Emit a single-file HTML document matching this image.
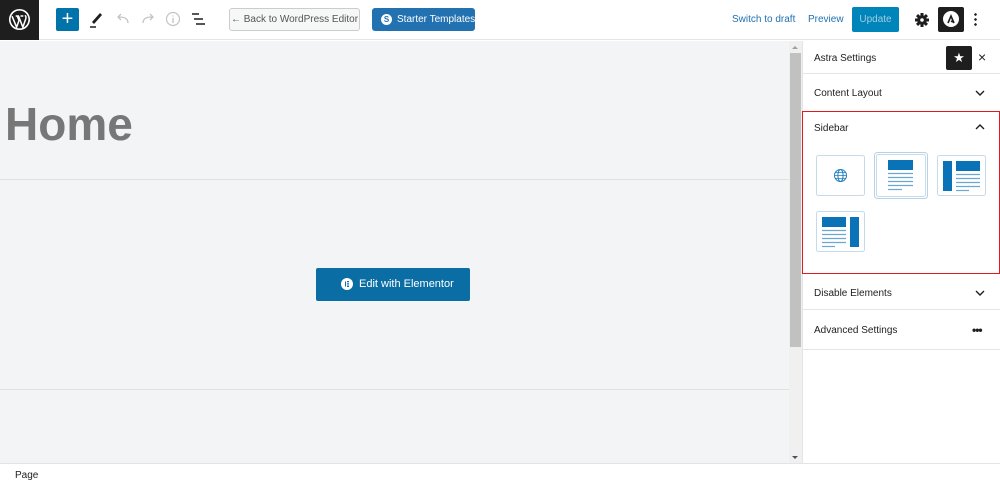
<!DOCTYPE html>
<html><head><style>
*{margin:0;padding:0;box-sizing:border-box}
body{width:1000px;height:485px;overflow:hidden;font-family:"Liberation Sans",sans-serif;background:#fff;position:relative;color:#1e1e1e}
.a{position:absolute;white-space:nowrap}
.t{font-size:10px}
</style></head><body>
<div class="a" style="left:0;top:0;width:1000px;height:40px;background:#fff;border-bottom:1px solid #e2e4e7"></div>
<div class="a" style="left:0;top:0;width:39px;height:40px;background:#1e1e1e"></div>
<svg class="a" style="left:8px;top:8px" width="23" height="23" viewBox="0 0 24 24"><circle cx="12" cy="12" r="11" fill="#fff"/><circle cx="12" cy="12" r="9.3" fill="#1e1e1e"/><path d="M4.2 8.5 L9 20 L11.5 13 L9.5 8 M8 8.3h3.5 M11 8.5 L15.5 20 L18.5 11.5 C19.2 9.5 18.5 8 17.5 8 M13 8.3h3" stroke="#fff" stroke-width="1.6" fill="none"/></svg>
<div class="a" style="left:56px;top:8px;width:23px;height:23px;background:#0073aa;border-radius:2px;color:#fff;font-size:20px;line-height:22px;text-align:center">+</div>
<svg class="a" style="left:88px;top:10px" width="16" height="18"><path d="M4 12 L12 3 L14 5 L6 14 Z" fill="#1e1e1e"/><path d="M2 17h6" stroke="#1e1e1e" stroke-width="1.5"/></svg>
<svg class="a" style="left:115px;top:12px" width="16" height="14"><path d="M13 11 C13 6 9 5 4 5 M6 2 L3 5 L6 8" stroke="#c3c4c7" stroke-width="1.3" fill="none"/></svg>
<svg class="a" style="left:140px;top:12px" width="16" height="14"><path d="M3 11 C3 6 7 5 12 5 M10 2 L13 5 L10 8" stroke="#c3c4c7" stroke-width="1.3" fill="none"/></svg>
<svg class="a" style="left:165px;top:11px" width="16" height="16"><circle cx="8" cy="8" r="6.5" stroke="#c3c4c7" stroke-width="1.2" fill="none"/><path d="M8 7v5M8 4.5v1" stroke="#c3c4c7" stroke-width="1.4"/></svg>
<svg class="a" style="left:191px;top:12px" width="16" height="14"><path d="M1 2h7M3 7h9M5 12h9" stroke="#1e1e1e" stroke-width="1.6"/></svg>
<div class="a" style="left:229px;top:8px;width:131px;height:23px;border:1px solid #ccc;border-radius:3px;background:#f6f7f7;color:#555;font-size:10px;line-height:21px;text-align:center">← Back to WordPress Editor</div>
<div class="a" style="left:372px;top:8px;width:103px;height:23px;background:#2271b1;border-radius:3px;color:#fff;font-size:10px;line-height:23px;padding-left:25px">Starter Templates</div>
<div class="a" style="left:381px;top:14px;width:11px;height:11px;border-radius:50%;background:#fff;color:#2271b1;font-size:8px;font-weight:bold;line-height:11px;text-align:center">S</div>
<div class="a t" style="left:732px;top:14px;color:#2271b1">Switch to draft</div>
<div class="a t" style="left:808px;top:14px;color:#2271b1">Preview</div>
<div class="a" style="left:852px;top:7px;width:47px;height:25px;background:#0085ba;border-radius:2px;color:#a0cde3;font-size:10px;line-height:25px;text-align:center">Update</div>
<svg class="a" style="left:914px;top:12px" width="16" height="16" viewBox="0 0 16 16"><g fill="#1e1e1e"><rect x="6.5" y="1" width="3" height="14"/><rect x="6.5" y="1" width="3" height="14" transform="rotate(45 8 8)"/><rect x="6.5" y="1" width="3" height="14" transform="rotate(90 8 8)"/><rect x="6.5" y="1" width="3" height="14" transform="rotate(135 8 8)"/><circle cx="8" cy="8" r="4.8"/></g><circle cx="8" cy="8" r="1.8" fill="#fff"/></svg>
<div class="a" style="left:938px;top:7px;width:26px;height:25px;background:#1e1e1e;border-radius:2px"></div>
<div class="a" style="left:943px;top:11px;width:16px;height:16px;border-radius:50%;background:#fff"></div>
<svg class="a" style="left:943px;top:11px" width="16" height="16"><path d="M5 12 L8 5 L11 12 M8 10 L10 11" stroke="#1e1e1e" stroke-width="1.6" fill="none"/></svg>
<div class="a" style="left:974px;top:12px;width:3px;height:15px;background:radial-gradient(circle,#1e1e1e 1.2px,transparent 1.4px) 0 0/3px 5px"></div>
<div class="a" style="left:0;top:41px;width:789px;height:422px;background:#f3f4f5"></div>
<div class="a" style="left:5px;top:97px;font-size:46px;font-weight:bold;color:#777">Home</div>
<div class="a" style="left:0;top:179px;width:789px;height:1px;background:#e0e0e0"></div>
<div class="a" style="left:0;top:389px;width:789px;height:1px;background:#e0e0e0"></div>
<div class="a" style="left:316px;top:268px;width:154px;height:33px;background:#0a6ea5;border-radius:2px;color:#fff;font-size:11px;line-height:33px;padding-left:43px">Edit with Elementor</div>
<div class="a" style="left:341px;top:278px;width:12px;height:12px;border-radius:50%;background:#fff"></div>
<svg class="a" style="left:341px;top:278px" width="12" height="12"><path d="M4.5 3.5v5M6 3.5h2M6 5.3h2M6 7h2M6 8.5h2" stroke="#0a6ea5" stroke-width="1"/></svg>
<div class="a" style="left:789px;top:41px;width:13px;height:422px;background:#f0f0f0"></div>
<div class="a" style="left:790px;top:53px;width:11px;height:294px;background:#c1c1c1"></div>
<div class="a" style="left:792px;top:46px;border:3px solid transparent;border-bottom:3px solid #a0a0a0;border-top:0"></div>
<div class="a" style="left:792px;top:456px;border:3px solid transparent;border-top:3px solid #505050;border-bottom:0"></div>
<div class="a" style="left:802px;top:41px;width:198px;height:422px;background:#fff;border-left:1px solid #e2e4e7"></div>
<div class="a t" style="left:814px;top:53px;font-size:10px">Astra Settings</div>
<div class="a" style="left:946px;top:46px;width:26px;height:24px;background:#1e1e1e;border-radius:2px;color:#fff;text-align:center;font-size:13px;line-height:24px">★</div>
<div class="a" style="left:978px;top:49px;font-size:14px">×</div>
<div class="a" style="left:803px;top:73px;width:197px;height:1px;background:#e2e4e7"></div>
<div class="a t" style="left:814px;top:88px">Content Layout</div>
<svg class="a" style="left:975px;top:89px" width="10" height="8"><path d="M1 2l4 4 4-4" stroke="#1e1e1e" stroke-width="1.4" fill="none"/></svg>
<div class="a" style="left:802px;top:111px;width:198px;height:163px;border:1px solid #e01b1b"></div>
<div class="a t" style="left:814px;top:123px">Sidebar</div>
<svg class="a" style="left:975px;top:123px" width="10" height="8"><path d="M1 6l4-4 4 4" stroke="#1e1e1e" stroke-width="1.4" fill="none"/></svg>
<svg class="a" style="left:812px;top:148px" width="180" height="108">
<rect x="4.5" y="7.5" width="48" height="40" rx="2" fill="#fff" stroke="#c5dbea"/>
<circle cx="28.5" cy="27.5" r="6" fill="none" stroke="#1f7fc0" stroke-width="1"/><ellipse cx="28.5" cy="27.5" rx="2.6" ry="6" fill="none" stroke="#1f7fc0"/><path d="M22.5 27.5h12M23.5 24.5h10M23.5 30.5h10" stroke="#1f7fc0" stroke-width=".8"/>
<rect x="62.5" y="4.5" width="53" height="46" rx="3" fill="#fff" stroke="#b8d1e6"/>
<rect x="64.5" y="6.5" width="49" height="42" rx="2" fill="#fff" stroke="#c5dbea"/>
<rect x="76" y="12" width="25" height="10" fill="#0a73b7"/>
<path d="M76 25.5h25M76 29.5h25M76 33.5h25M76 37.5h25" stroke="#6aa7d1" stroke-width="1.2"/><path d="M76 41.5h14" stroke="#6aa7d1" stroke-width="1.2"/>
<rect x="125.5" y="7.5" width="48" height="40" rx="2" fill="#fff" stroke="#c5dbea"/>
<rect x="131" y="13" width="9" height="30" fill="#0a73b7"/><rect x="144" y="13" width="24" height="10" fill="#0a73b7"/>
<path d="M144 26.5h24M144 30.5h24M144 34.5h24M144 38.5h24" stroke="#6aa7d1" stroke-width="1.2"/><path d="M144 42.5h13" stroke="#6aa7d1" stroke-width="1.2"/>
<rect x="4.5" y="63.5" width="48" height="40" rx="2" fill="#fff" stroke="#c5dbea"/>
<rect x="10" y="69" width="24" height="10" fill="#0a73b7"/><rect x="38" y="69" width="9" height="30" fill="#0a73b7"/>
<path d="M10 82.5h24M10 86.5h24M10 90.5h24M10 94.5h24" stroke="#6aa7d1" stroke-width="1.2"/><path d="M10 98.5h13" stroke="#6aa7d1" stroke-width="1.2"/>
</svg>
<div class="a t" style="left:814px;top:288px">Disable Elements</div>
<svg class="a" style="left:975px;top:289px" width="10" height="8"><path d="M1 2l4 4 4-4" stroke="#1e1e1e" stroke-width="1.4" fill="none"/></svg>
<div class="a" style="left:803px;top:309px;width:197px;height:1px;background:#e2e4e7"></div>
<div class="a t" style="left:814px;top:325px">Advanced Settings</div>
<div class="a" style="left:972px;top:323px;font-size:12px;font-weight:bold;letter-spacing:-1px">•••</div>
<div class="a" style="left:803px;top:349px;width:197px;height:1px;background:#e2e4e7"></div>
<div class="a" style="left:0;top:463px;width:1000px;height:22px;background:#fff;border-top:1px solid #e2e4e7"></div>
<div class="a t" style="left:15px;top:470px">Page</div>
</body></html>
